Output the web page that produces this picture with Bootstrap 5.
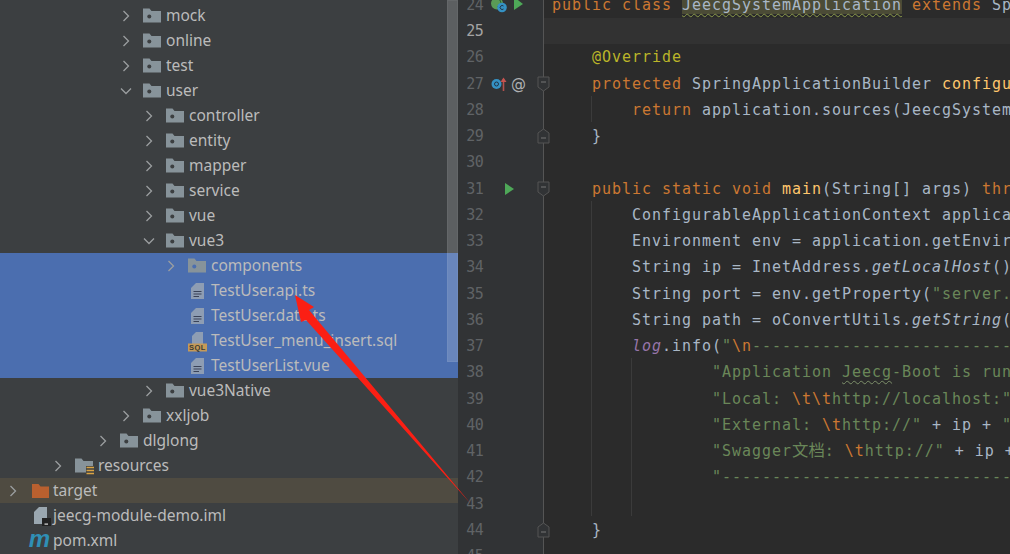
<!doctype html>
<html lang="en"><head><meta charset="utf-8"><title>IDE</title>
<link href="https://cdn.jsdelivr.net/npm/bootstrap@5.3.0/dist/css/bootstrap.min.css" rel="stylesheet">
<style>
html,body{height:100%;overflow:hidden;background:#2b2b2b}
.ide{height:554px;width:1010px;position:relative;overflow:hidden}
.tree{width:458px;background:#3c3f41;padding-top:3px;color:#bbb;font:15.5px/25px "Noto Sans",sans-serif;flex:none;overflow:hidden}
.trow{height:25px;white-space:nowrap}
.sel{background:#4b6eaf}.exc{background:#4f4b41}
.l0{padding-left:7px}.l1{padding-left:52px}.l2{padding-left:97px}.l3{padding-left:120px}.l4{padding-left:143px}.l5{padding-left:165px}
.chev{width:12px;height:12px;flex:none;margin-right:11px}
.blank{width:12px;flex:none;margin-right:11px}
.ico{width:18px;height:18px;flex:none;margin-right:5px;overflow:visible}
.vbar{position:absolute;left:447px;top:0;width:11px;height:362px;background:rgba(255,255,255,.17);border:1px solid rgba(255,255,255,.05)}
.gut{width:86px;background:#313335;flex:none;border-right:1px solid #555}
.ed{flex:1;min-width:0;margin-top:-8.2px;overflow:hidden}
.lrow{height:26.25px;line-height:26.25px;white-space:pre;position:relative}
.num{width:25px;text-align:right;color:#606366;font:15px/26.25px "DejaVu Sans Mono",monospace;letter-spacing:-.7px;flex:none}
.cur{color:#a4a3a3}
.gi{width:16px;height:16px;flex:none;overflow:visible}
.gi1{margin-left:8px}.gi2{margin-left:7px}.gi3{margin-left:21px}
.atm{margin-left:4px;color:#afb1b3;font:15px/26px "DejaVu Sans",sans-serif}
.code{font:15px/26.25px "DejaVu Sans Mono",monospace;letter-spacing:.97px;color:#a9b7c6;padding-left:8px}
.curl{background:#323232}
.kw{color:#cc7832}.an{color:#bbb529}.fn{color:#ffc66d}.st{color:#6a8759}.lg{color:#9876aa;font-style:italic}.it{font-style:italic}
.cls{background:#4b4b36;text-decoration:underline wavy #8a9a4a 1px;text-underline-offset:3px}
.wv{text-decoration:underline wavy #7d8f6a 1px;text-underline-offset:3px}
.cjk{font-family:"Noto Sans CJK SC",sans-serif;font-size:16.4px;letter-spacing:0;line-height:0}
.guide{position:absolute;width:1px;background:#3b3b3b}
.g1{left:591px;top:96px;height:26px}.g2{left:591px;top:201px;height:315px}.g3{left:631px;top:358px;height:158px}
.fold{position:absolute;left:79px;top:5px;width:13px;height:16px}
.over{position:absolute;left:0;top:0;pointer-events:none}
</style></head><body>
<svg width="0" height="0" class="position-absolute"><defs>
<symbol id="r" viewBox="0 0 12 12"><path d="M3.5 1 8.5 6 3.5 11" fill="none" stroke="#9b9ea0" stroke-width="1.3"/></symbol>
<symbol id="d" viewBox="0 0 12 12"><path d="M1 3.5 6 8.5 11 3.5" fill="none" stroke="#9b9ea0" stroke-width="1.3"/></symbol>
<symbol id="f" viewBox="0 0 18 18"><path d="M0 1.5H6.5L8.5 4H18V15.5H0Z" fill="#87939a"/><circle cx="6.3" cy="9.5" r="2" fill="#3c3f41"/></symbol>
<symbol id="fs" viewBox="0 0 18 18"><path d="M0 1.5H6.5L8.5 4H18V15.5H0Z" fill="#87939a"/><circle cx="6.3" cy="9.5" r="2" fill="#4b6eaf"/></symbol>
<symbol id="t" viewBox="0 0 18 18"><path d="M8 1H16V17H3V6Z" fill="#8e9db3"/><path d="M5.5 9.5H13.5M5.5 12H13.5M5.5 14.5H11" stroke="#3a4358" stroke-width="1.2"/></symbol>
<symbol id="fu" viewBox="0 0 13 16"><path d="M1 1H12V11L6.5 15 1 11Z" fill="#313335" stroke="#555"/><path d="M4 6H9" stroke="#777"/></symbol>
<symbol id="fo" viewBox="0 0 13 16"><path d="M1 15H12V5L6.5 1 1 5Z" fill="#313335" stroke="#555"/><path d="M4 10H9" stroke="#777"/></symbol>
</defs></svg>
<div class="ide d-flex">
<div class="tree">
<div class="trow d-flex align-items-center l3"><svg class="chev"><use href="#r"/></svg><svg class="ico"><use href="#f"/></svg>mock</div>
<div class="trow d-flex align-items-center l3"><svg class="chev"><use href="#r"/></svg><svg class="ico"><use href="#f"/></svg>online</div>
<div class="trow d-flex align-items-center l3"><svg class="chev"><use href="#r"/></svg><svg class="ico"><use href="#f"/></svg>test</div>
<div class="trow d-flex align-items-center l3"><svg class="chev"><use href="#d"/></svg><svg class="ico"><use href="#f"/></svg>user</div>
<div class="trow d-flex align-items-center l4"><svg class="chev"><use href="#r"/></svg><svg class="ico"><use href="#f"/></svg>controller</div>
<div class="trow d-flex align-items-center l4"><svg class="chev"><use href="#r"/></svg><svg class="ico"><use href="#f"/></svg>entity</div>
<div class="trow d-flex align-items-center l4"><svg class="chev"><use href="#r"/></svg><svg class="ico"><use href="#f"/></svg>mapper</div>
<div class="trow d-flex align-items-center l4"><svg class="chev"><use href="#r"/></svg><svg class="ico"><use href="#f"/></svg>service</div>
<div class="trow d-flex align-items-center l4"><svg class="chev"><use href="#r"/></svg><svg class="ico"><use href="#f"/></svg>vue</div>
<div class="trow d-flex align-items-center l4"><svg class="chev"><use href="#d"/></svg><svg class="ico"><use href="#f"/></svg>vue3</div>
<div class="trow d-flex align-items-center l5 sel"><svg class="chev"><use href="#r"/></svg><svg class="ico"><use href="#fs"/></svg>components</div>
<div class="trow d-flex align-items-center l5 sel"><span class="blank"></span><svg class="ico"><use href="#t"/></svg>TestUser.api.ts</div>
<div class="trow d-flex align-items-center l5 sel"><span class="blank"></span><svg class="ico"><use href="#t"/></svg>TestUser.data.ts</div>
<div class="trow d-flex align-items-center l5 sel"><span class="blank"></span><svg class="ico" viewBox="0 0 18 18"><path d="M8 0H15V12H4V4Z" fill="#8e9db3"/><rect x="0" y="11.5" width="19" height="8" fill="#c59a58"/><text x="9.5" y="18" font-size="7.5" font-weight="700" text-anchor="middle" fill="#3a3a35" font-family="Liberation Sans" letter-spacing=".5">SQL</text></svg>TestUser_menu_insert.sql</div>
<div class="trow d-flex align-items-center l5 sel"><span class="blank"></span><svg class="ico"><use href="#t"/></svg>TestUserList.vue</div>
<div class="trow d-flex align-items-center l4"><svg class="chev"><use href="#r"/></svg><svg class="ico"><use href="#f"/></svg>vue3Native</div>
<div class="trow d-flex align-items-center l3"><svg class="chev"><use href="#r"/></svg><svg class="ico"><use href="#f"/></svg>xxljob</div>
<div class="trow d-flex align-items-center l2"><svg class="chev"><use href="#r"/></svg><svg class="ico"><use href="#f"/></svg>dlglong</div>
<div class="trow d-flex align-items-center l1"><svg class="chev"><use href="#r"/></svg><svg class="ico" viewBox="0 0 18 18"><path d="M0 1.5H6.5L8.5 4H18V15.5H0Z" fill="#87939a"/><path d="M11 9h8v9h-8z" fill="#3c3f41"/><path d="M11.5 10.5h7.5M11.5 13.5h7.5M11.5 16.5h7.5" stroke="#d9a343" stroke-width="1.6"/></svg>resources</div>
<div class="trow d-flex align-items-center l0 exc"><svg class="chev"><use href="#r"/></svg><svg class="ico" viewBox="0 0 18 18"><path d="M2 2H8.5L10.5 4.5H19V16H2Z" fill="#b9602f"/></svg>target</div>
<div class="trow d-flex align-items-center l0"><span class="blank"></span><svg class="ico" viewBox="0 0 18 18"><path d="M9 0H17V14H4V5Z" fill="#9aa7b0"/><path d="M4 14V17H17V14Z" fill="#9aa7b0"/><rect x="12" y="11" width="9" height="8" fill="#222"/><rect x="14.5" y="16.5" width="3.5" height="1.2" fill="#ddd"/></svg>jeecg-module-demo.iml</div>
<div class="trow d-flex align-items-center l0"><span class="blank"></span><svg class="ico" viewBox="0 0 18 18"><text x="9.5" y="14.5" font-size="24" font-weight="700" font-style="italic" text-anchor="middle" fill="#2f8fb5" font-family="Liberation Sans">m</text></svg>pom.xml</div>
</div>
<div class="flex-grow-1 ed">
<div class="lrow d-flex"><div class="gut d-flex align-items-center"><div class="num">24</div><svg class="gi gi1" viewBox="0 0 16 16"><circle cx="6" cy="6.5" r="6" fill="#5a9b56"/><path d="M6 2a4 4 0 0 1 0 8" fill="none" stroke="#2f5f3a"/><circle cx="11" cy="10.5" r="4.8" fill="#3592c4"/><path d="M12.5 9a2 2 0 1 0 0 3" fill="none" stroke="#234"/></svg><svg class="gi gi2" viewBox="0 0 16 16"><path d="M0 0 9 7 0 13Z" fill="#4ea858"/></svg></div><div class="code flex-grow-1"><span class="kw">public class </span><span class="cls">JeecgSystemApplication</span><span class="kw"> extends </span>Sp</div></div>
<div class="lrow d-flex"><div class="gut d-flex align-items-center"><div class="num cur">25</div></div><div class="code flex-grow-1 curl"> </div></div>
<div class="lrow d-flex"><div class="gut d-flex align-items-center"><div class="num">26</div></div><div class="code flex-grow-1">    <span class="an">@Override</span></div></div>
<div class="lrow d-flex"><div class="gut d-flex align-items-center"><div class="num">27</div><svg class="gi gi1" viewBox="0 0 16 16"><circle cx="5.5" cy="8" r="5" fill="#3592c4"/><circle cx="5.5" cy="8" r="2" fill="none" stroke="#234"/><path d="M12.5 15V3" stroke="#b3524e" stroke-width="1.6"/><path d="M9.5 6 12.5 1.5 15.5 6Z" fill="#c75450"/></svg><span class="atm">@</span></div><div class="code flex-grow-1">    <span class="kw">protected </span>SpringApplicationBuilder <span class="fn">configu</span></div><svg class="fold"><use href="#fu"/></svg></div>
<div class="lrow d-flex"><div class="gut d-flex align-items-center"><div class="num">28</div></div><div class="code flex-grow-1">        <span class="kw">return </span>application.sources(JeecgSystem</div></div>
<div class="lrow d-flex"><div class="gut d-flex align-items-center"><div class="num">29</div></div><div class="code flex-grow-1">    }</div><svg class="fold"><use href="#fo"/></svg></div>
<div class="lrow d-flex"><div class="gut d-flex align-items-center"><div class="num">30</div></div><div class="code flex-grow-1"> </div></div>
<div class="lrow d-flex"><div class="gut d-flex align-items-center"><div class="num">31</div><svg class="gi gi3" viewBox="0 0 16 16"><path d="M1 2 10 8 1 14Z" fill="#4ea858"/></svg></div><div class="code flex-grow-1">    <span class="kw">public static void </span><span class="fn">main</span>(String[] args) <span class="kw">thr</span></div><svg class="fold"><use href="#fu"/></svg></div>
<div class="lrow d-flex"><div class="gut d-flex align-items-center"><div class="num">32</div></div><div class="code flex-grow-1">        ConfigurableApplicationContext applica</div></div>
<div class="lrow d-flex"><div class="gut d-flex align-items-center"><div class="num">33</div></div><div class="code flex-grow-1">        Environment env = application.getEnvir</div></div>
<div class="lrow d-flex"><div class="gut d-flex align-items-center"><div class="num">34</div></div><div class="code flex-grow-1">        String ip = InetAddress.<span class="it">getLocalHost</span>()</div></div>
<div class="lrow d-flex"><div class="gut d-flex align-items-center"><div class="num">35</div></div><div class="code flex-grow-1">        String port = env.getProperty(<span class="st">"server.</span></div></div>
<div class="lrow d-flex"><div class="gut d-flex align-items-center"><div class="num">36</div></div><div class="code flex-grow-1">        String path = oConvertUtils.<span class="it">getString</span>(</div></div>
<div class="lrow d-flex"><div class="gut d-flex align-items-center"><div class="num">37</div></div><div class="code flex-grow-1">        <span class="lg">log</span>.info(<span class="st">"</span><span class="kw">\n</span><span class="st">---------------------------</span></div></div>
<div class="lrow d-flex"><div class="gut d-flex align-items-center"><div class="num">38</div></div><div class="code flex-grow-1"><span class="st">                "Application <span class="wv">Jeecg</span>-Boot is run</span></div></div>
<div class="lrow d-flex"><div class="gut d-flex align-items-center"><div class="num">39</div></div><div class="code flex-grow-1"><span class="st">                "Local: </span><span class="kw">\t\t</span><span class="st">http://localhost:"</span></div></div>
<div class="lrow d-flex"><div class="gut d-flex align-items-center"><div class="num">40</div></div><div class="code flex-grow-1"><span class="st">                "External: </span><span class="kw">\t</span><span class="st">http://"</span> + ip + <span class="st">"</span></div></div>
<div class="lrow d-flex"><div class="gut d-flex align-items-center"><div class="num">41</div></div><div class="code flex-grow-1"><span class="st">                "Swagger<span class="cjk">文档</span>: </span><span class="kw">\t</span><span class="st">http://"</span> + ip +</div></div>
<div class="lrow d-flex"><div class="gut d-flex align-items-center"><div class="num">42</div></div><div class="code flex-grow-1"><span class="st">                "-----------------------------</span></div></div>
<div class="lrow d-flex"><div class="gut d-flex align-items-center"><div class="num">43</div></div><div class="code flex-grow-1"> </div></div>
<div class="lrow d-flex"><div class="gut d-flex align-items-center"><div class="num">44</div></div><div class="code flex-grow-1">    }</div><svg class="fold"><use href="#fo"/></svg></div>
<div class="lrow d-flex"><div class="gut d-flex align-items-center"><div class="num">45</div></div><div class="code flex-grow-1"> </div></div>
</div>
<div class="vbar"></div>
<div class="guide g1"></div><div class="guide g2"></div><div class="guide g3"></div>
<svg class="over" width="1010" height="554"><polygon points="295,295 314,307 309,310 471,504 306,320 301,322" fill="#fb1f14"/></svg>
</div>
<script src="https://cdn.jsdelivr.net/npm/bootstrap@5.3.0/dist/js/bootstrap.bundle.min.js"></script>
</body></html>
